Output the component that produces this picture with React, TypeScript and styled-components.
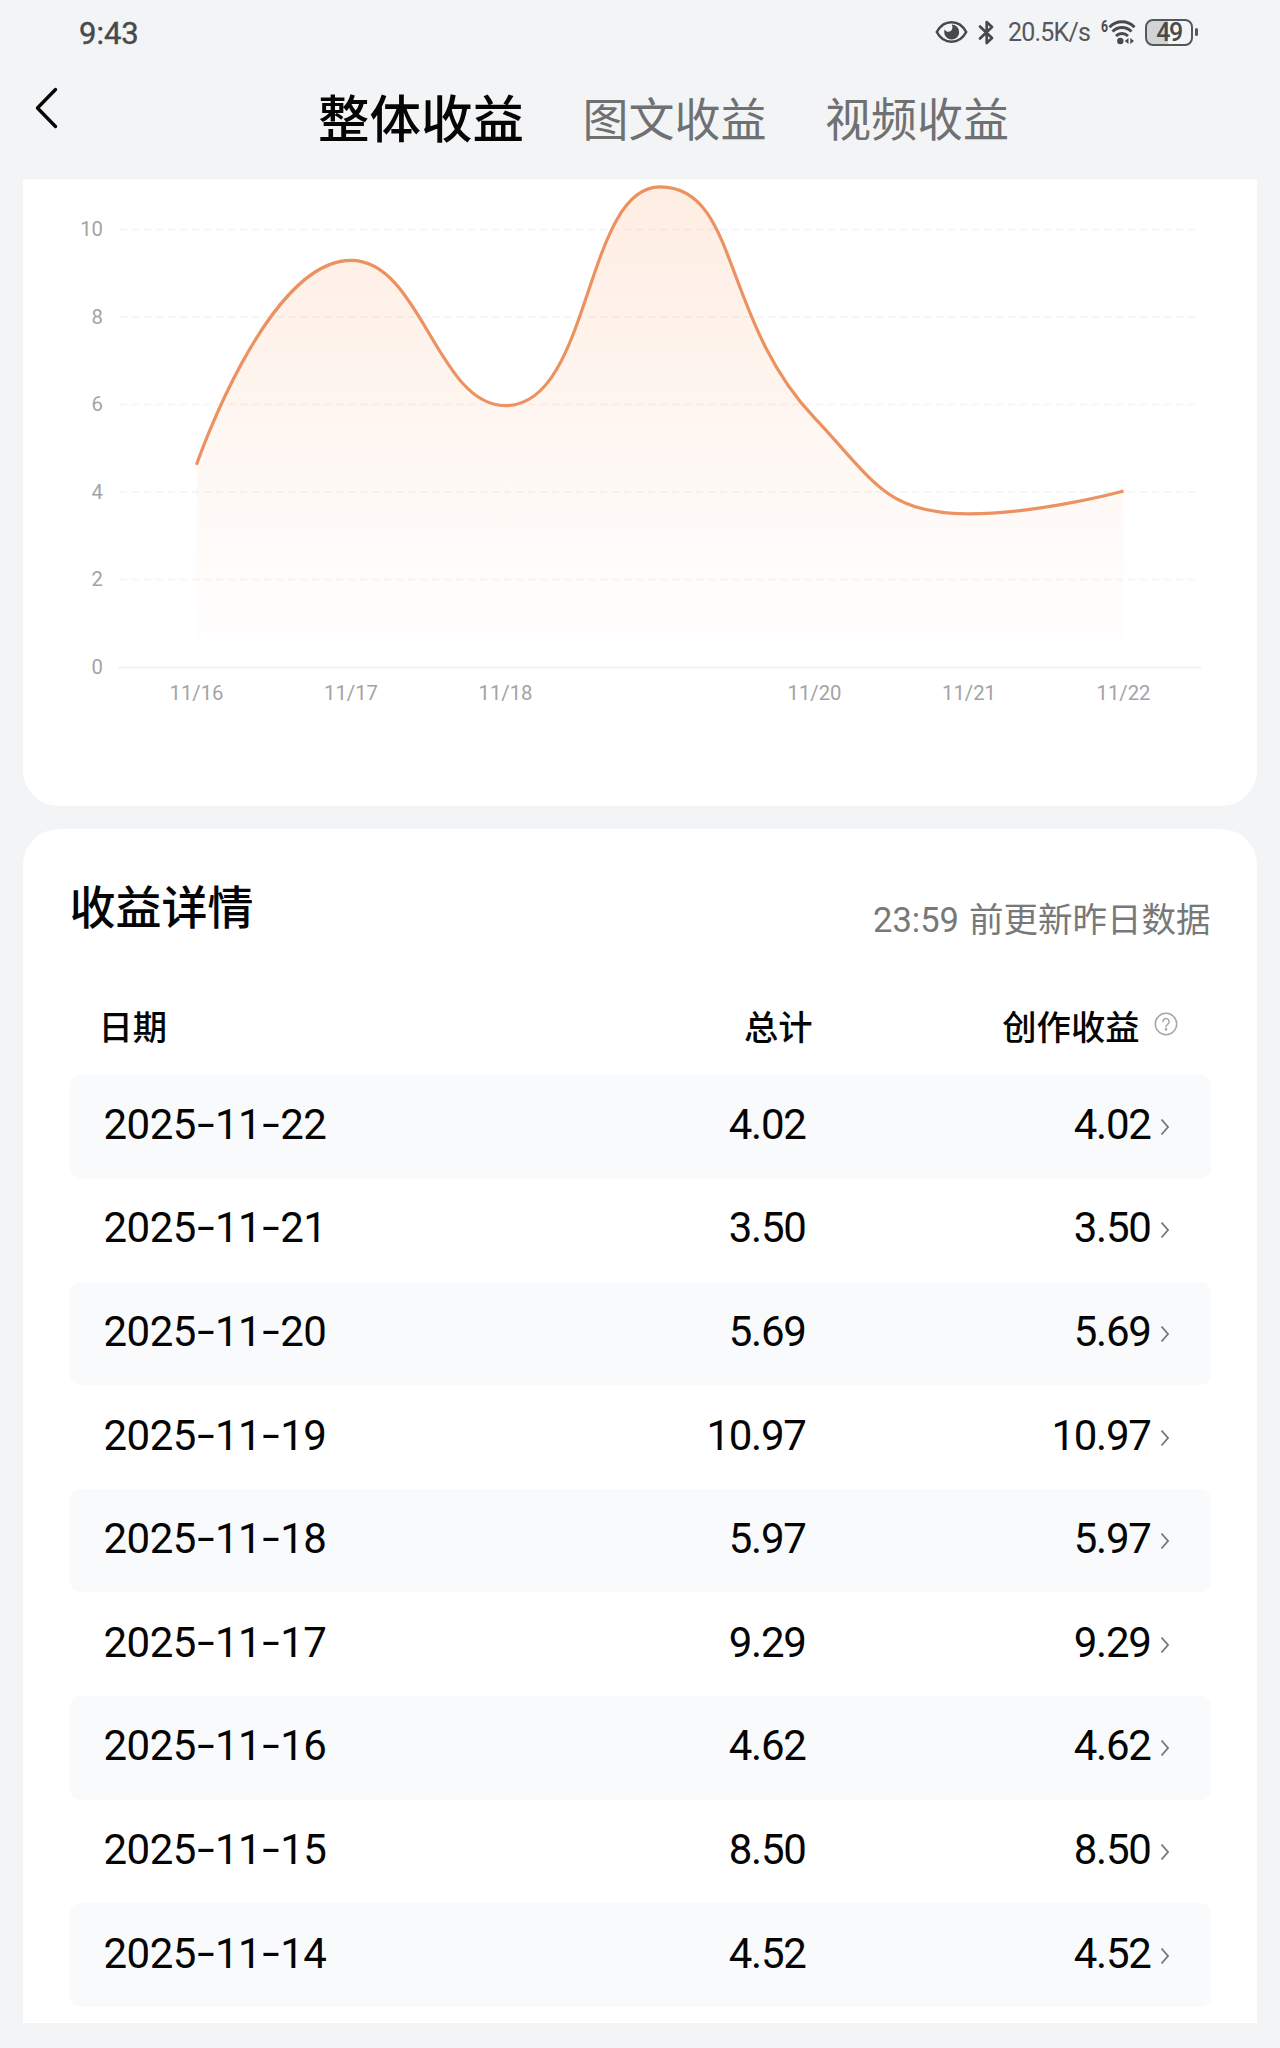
import React from "react";
import styled, { createGlobalStyle } from "styled-components";

const LATIN = `Roboto, "Noto Sans CJK SC", sans-serif`;
const HAN = `"Noto Sans CJK SC", "Noto Sans", sans-serif`;

const GlobalStyle = createGlobalStyle`
  *, *::before, *::after { box-sizing: border-box; }
  html, body { margin: 0; padding: 0; background: #f3f4f6; }
  body { font-family: ${LATIN}; color: #050505; }
`;

const Screen = styled.div`
  width: 1280px;
  height: 2048px;
  overflow: hidden;
  background: #f3f4f6;
  display: flex;
  flex-direction: column;
`;

/* ---------- status bar ---------- */

const StatusBar = styled.header`
  height: 64px;
  padding: 0 82px 0 79px;
  display: flex;
  align-items: center;
  justify-content: space-between;
  color: #47494b;
`;

const Clock = styled.time`
  font-size: 31px;
  line-height: 36px;
  font-weight: 400;
  -webkit-text-stroke: 0.4px #47494b;
  padding-top: 3px;
`;

const StatusGroup = styled.div`
  display: flex;
  align-items: center;
`;

const Speed = styled.span`
  font-size: 25px;
  line-height: 30px;
  margin: 2px 11px 0 13px;
  width: 82px;
  letter-spacing: -0.8px;
  white-space: nowrap;
  color: #55575a;
`;

const Battery = styled.div`
  width: 48px;
  height: 27px;
  border: 2.5px solid #55575a;
  border-radius: 8px;
  background: linear-gradient(to right, #d2d3d5 21px, transparent 21px);
  display: flex;
  align-items: center;
  justify-content: center;
  font-size: 25px;
  line-height: 25px;
  font-weight: 500;
  letter-spacing: -1.5px;
  margin-left: 8px;
`;

const BatteryNub = styled.div`
  width: 3px;
  height: 8px;
  border-radius: 1.5px;
  background: #55575a;
  margin-left: 2px;
`;

/* ---------- navigation ---------- */

const NavBar = styled.nav`
  height: 115px;
  padding-left: 34px;
  display: flex;
  align-items: flex-start;
`;

const BackButton = styled.button`
  border: 0;
  padding: 0;
  background: none;
  width: 24px;
  height: 44px;
  margin-top: 22px;
  display: flex;
`;

const Tabs = styled.div`
  display: flex;
  align-items: center;
  gap: 58.5px;
  height: 76px;
  margin: 13.5px 0 0 260px;
`;

const Tab = styled.span<{ $active?: boolean }>`
  font-family: ${HAN};
  font-size: ${(p) => (p.$active ? 51.5 : 46)}px;
  line-height: 76px;
  font-weight: ${(p) => (p.$active ? 500 : 400)};
  color: ${(p) => (p.$active ? "#050505" : "#6f7072")};
  white-space: nowrap;
`;

/* ---------- cards ---------- */

const ChartCard = styled.section`
  flex: none;
  width: 1234px;
  height: 627px;
  margin-left: 23px;
  background: #fff;
  border-radius: 0 0 36px 36px;
`;

const DetailCard = styled.section`
  flex: none;
  width: 1234px;
  height: 1194px;
  margin: 23px 0 0 23px;
  padding: 0 46.5px 0 46.5px;
  background: #fff;
  border-radius: 36px 36px 0 0;
`;

const DetailHeader = styled.div`
  height: 155px;
  display: flex;
  justify-content: space-between;
`;

const DetailTitle = styled.h2`
  margin: 40px 0 0 0;
  font-family: ${HAN};
  font-size: 46px;
  line-height: 70px;
  font-weight: 500;
`;

const UpdateNote = styled.span`
  margin-top: 66px;
  font-family: ${LATIN};
  font-size: 34.5px;
  line-height: 50px;
  color: #77787a;
  white-space: nowrap;
  word-spacing: 1.5px;
`;

const HeadRow = styled.div`
  height: 90.5px;
  padding: 5px 33px 0 29px;
  display: grid;
  grid-template-columns: 1fr 300px 365px;
  align-items: start;
  font-family: ${HAN};
  font-size: 34.3px;
  line-height: 72px;
  font-weight: 500;
`;

const HeadCell = styled.div<{ $end?: boolean }>`
  display: flex;
  align-items: center;
  justify-content: ${(p) => (p.$end ? "flex-end" : "flex-start")};
`;

const HelpIcon = styled.svg`
  width: 24px;
  height: 24px;
  margin-left: 14px;
  margin-top: -2px;
`;

const Row = styled.div<{ $shaded: boolean }>`
  height: 103.6px;
  padding: 0 41px 3px 34px;
  border-radius: 10px;
  background: ${(p) => (p.$shaded ? "#f9fafc" : "#fff")};
  display: grid;
  grid-template-columns: 1fr 300px 364px;
  align-items: center;
  font-size: 42px;
  line-height: 50px;
  letter-spacing: -0.5px;
`;

const Cell = styled.div<{ $end?: boolean }>`
  display: flex;
  align-items: center;
  justify-content: ${(p) => (p.$end ? "flex-end" : "flex-start")};
  letter-spacing: ${(p) => (p.$end ? -1.3 : -0.5)}px;
`;

const Dash = styled.span`
  width: 19px;
  display: inline-block;
  text-align: center;
  transform: translateY(-1px) scaleX(1.5);
`;

const RowArrow = styled.svg`
  width: 10px;
  height: 18px;
  margin: 4px 0 0 9px;
`;

/* ---------- chart ---------- */

type Pt = { x: number; y: number };

const SERIES = [
  { label: "11/16", value: 4.62 },
  { label: "11/17", value: 9.29 },
  { label: "11/18", value: 5.97 },
  { label: "", value: 10.97 },
  { label: "11/20", value: 5.69 },
  { label: "11/21", value: 3.5 },
  { label: "11/22", value: 4.02 },
];

const AXIS_Y = 488.5;
const UNIT = 43.75;
const FIRST_X = 173.5;
const STEP_X = 154.5;

const between = (v: number, a: number, b: number) =>
  Math.max(Math.min(v, Math.max(a, b)), Math.min(a, b));

function smoothPath(pts: Pt[], smooth = 0.5) {
  let d = `M${pts[0].x} ${pts[0].y}`;
  let out = { ...pts[0] };
  for (let i = 1; i < pts.length; i++) {
    const prev = pts[i - 1];
    const p = pts[i];
    const next = pts[i + 1];
    let cin = { ...p };
    let cout = { ...p };
    if (next) {
      const lp = Math.hypot(p.x - prev.x, p.y - prev.y);
      const ln = Math.hypot(next.x - p.x, next.y - p.y);
      const r = ln / (ln + lp);
      cout = {
        x: between(p.x + (next.x - prev.x) * smooth * r, p.x, next.x),
        y: between(p.y + (next.y - prev.y) * smooth * r, p.y, next.y),
      };
      cin = {
        x: between(p.x - ((cout.x - p.x) * lp) / ln, prev.x, p.x),
        y: between(p.y - ((cout.y - p.y) * lp) / ln, prev.y, p.y),
      };
      cout = {
        x: p.x + ((p.x - cin.x) * ln) / lp,
        y: p.y + ((p.y - cin.y) * ln) / lp,
      };
    }
    d += `C${out.x} ${out.y} ${cin.x} ${cin.y} ${p.x} ${p.y}`;
    out = cout;
  }
  return d;
}

const ChartSvg = styled.svg`
  display: block;
  width: 1234px;
  height: 560px;
  font-family: ${LATIN};
  font-size: 20.3px;
  fill: #a2a3a5;
`;

function IncomeChart() {
  const pts = SERIES.map((s, i) => ({
    x: FIRST_X + i * STEP_X,
    y: AXIS_Y - s.value * UNIT - 0.6,
  }));
  const line = smoothPath(pts);
  const area = `${line}L${pts[pts.length - 1].x} ${AXIS_Y}L${pts[0].x} ${AXIS_Y}Z`;
  return (
    <ChartSvg viewBox="0 0 1234 560">
      <defs>
        <linearGradient id="fade" x1="0" y1="0" x2="0" y2="1">
          <stop offset="0" stopColor="#fb8a45" stopOpacity="0.155" />
          <stop offset="0.55" stopColor="#fb8a45" stopOpacity="0.065" />
          <stop offset="1" stopColor="#fb8a45" stopOpacity="0" />
        </linearGradient>
      </defs>
      {[10, 8, 6, 4, 2].map((v) => (
        <line
          key={v}
          x1={97}
          x2={1175}
          y1={AXIS_Y - v * UNIT - 0.5}
          y2={AXIS_Y - v * UNIT - 0.5}
          stroke="#f5f5f5"
          strokeWidth={2}
          strokeDasharray="7 5"
        />
      ))}
      <line x1={95} x2={1178} y1={AXIS_Y} y2={AXIS_Y} stroke="#f2f3f4" strokeWidth={2} />
      <path d={area} fill="url(#fade)" />
      <path d={line} fill="none" stroke="#ec9260" strokeWidth={3.2} />
      {[10, 8, 6, 4, 2, 0].map((v) => (
        <text key={v} x={80} y={AXIS_Y - v * UNIT + 6.2} textAnchor="end">
          {v}
        </text>
      ))}
      {SERIES.map((s, i) =>
        s.label ? (
          <text key={s.label} x={FIRST_X + i * STEP_X} y={520.5} textAnchor="middle">
            {s.label}
          </text>
        ) : null
      )}
    </ChartSvg>
  );
}

/* ---------- icons ---------- */

const EyeIcon = () => (
  <svg width="33" height="24" viewBox="0 0 33 24">
    <path
      d="M1.8 12C5 6 10.3 2.2 16.5 2.2S28 6 31.2 12C28 18 22.7 21.8 16.5 21.8S5 18 1.8 12Z"
      fill="none"
      stroke="#47494b"
      strokeWidth="2.6"
      strokeLinejoin="round"
    />
    <path
      d="M16.8 4.6a7.5 7.5 0 1 1-7.6 7.4c0-.9.2-1.7.5-2.5 1.3 2.2 4 3 6 1.6 2-1.5 2.200-4.300 1.100-6.500Z"
      fill="#47494b"
    />
  </svg>
);

const BluetoothSvg = styled.svg`
  margin-left: 10px;
`;

const BluetoothIcon = () => (
  <BluetoothSvg width="17" height="25" viewBox="0 0 17 25">
    <path
      d="M2 6.5 14 18 8.7 23V2L14 7 2 18.5"
      fill="none"
      stroke="#47494b"
      strokeWidth="2.7"
      strokeLinejoin="round"
      strokeLinecap="round"
    />
  </BluetoothSvg>
);

const WifiIcon = () => (
  <svg width="36" height="28" viewBox="0 0 36 28">
    <text x="0" y="13.5" fontSize="16" fontWeight="700" fill="#47494b" textLength="7" lengthAdjust="spacingAndGlyphs">
      6
    </text>
    <g fill="none" stroke="#47494b" strokeWidth="2.9">
      <path d="M8.5 9.2C15.5 1.9 26.5 1.9 33.5 9.2" />
      <path d="M11.5 13.5C17 8.2 25 8.2 30.5 13.5" />
      <path d="M15 18C18.5 14.6 23.5 14.6 27 18" />
    </g>
    <circle cx="19.3" cy="23" r="3.2" fill="#47494b" />
    <path d="M27.5 20v6l-3.7-3ZM29.3 20v6l3.7-3Z" fill="#47494b" />
  </svg>
);

/* ---------- data ---------- */

const RECORDS: [string, string][] = [
  ["2025-11-22", "4.02"],
  ["2025-11-21", "3.50"],
  ["2025-11-20", "5.69"],
  ["2025-11-19", "10.97"],
  ["2025-11-18", "5.97"],
  ["2025-11-17", "9.29"],
  ["2025-11-16", "4.62"],
  ["2025-11-15", "8.50"],
  ["2025-11-14", "4.52"],
];

function DateText({ value }: { value: string }) {
  const [y, m, d] = value.split("-");
  return (
    <span>
      {y}
      <Dash>-</Dash>
      {m}
      <Dash>-</Dash>
      {d}
    </span>
  );
}

export default function App() {
  return (
    <Screen>
      <GlobalStyle />
      <StatusBar>
        <Clock>9:43</Clock>
        <StatusGroup>
          <EyeIcon />
          <BluetoothIcon />
          <Speed>20.5K/s</Speed>
          <WifiIcon />
          <Battery>49</Battery>
          <BatteryNub />
        </StatusGroup>
      </StatusBar>
      <NavBar>
        <BackButton aria-label="返回">
          <svg width="24" height="44" viewBox="0 0 24 44">
            <path
              d="M21.5 3.5 3.5 22 21.5 40.5"
              fill="none"
              stroke="#050505"
              strokeWidth="3.4"
              strokeLinecap="round"
              strokeLinejoin="round"
            />
          </svg>
        </BackButton>
        <Tabs>
          <Tab $active>整体收益</Tab>
          <Tab>图文收益</Tab>
          <Tab>视频收益</Tab>
        </Tabs>
      </NavBar>
      <ChartCard>
        <IncomeChart />
      </ChartCard>
      <DetailCard>
        <DetailHeader>
          <DetailTitle>收益详情</DetailTitle>
          <UpdateNote>23:59 前更新昨日数据</UpdateNote>
        </DetailHeader>
        <HeadRow>
          <HeadCell>日期</HeadCell>
          <HeadCell $end>总计</HeadCell>
          <HeadCell $end>
            创作收益
            <HelpIcon viewBox="0 0 24 24" fill="none" stroke="#a5a6a8" strokeWidth="1.5">
              <circle cx="12" cy="12" r="10.7" />
              <path d="M8.9 9.7a3.1 3.1 0 1 1 4.7 2.6c-1.1.7-1.6 1.2-1.6 2.4" strokeLinecap="round" />
              <circle cx="12" cy="17.3" r="0.6" fill="#a5a6a8" />
            </HelpIcon>
          </HeadCell>
        </HeadRow>
        {RECORDS.map(([date, amount], i) => (
          <Row key={date} $shaded={i % 2 === 0}>
            <Cell>
              <DateText value={date} />
            </Cell>
            <Cell $end>{amount}</Cell>
            <Cell $end>
              {amount}
              <RowArrow viewBox="0 0 10 18">
                <path d="M1.5 1.5 8 9 1.5 16.5" fill="none" stroke="#77787a" strokeWidth="1.9" />
              </RowArrow>
            </Cell>
          </Row>
        ))}
      </DetailCard>
    </Screen>
  );
}
